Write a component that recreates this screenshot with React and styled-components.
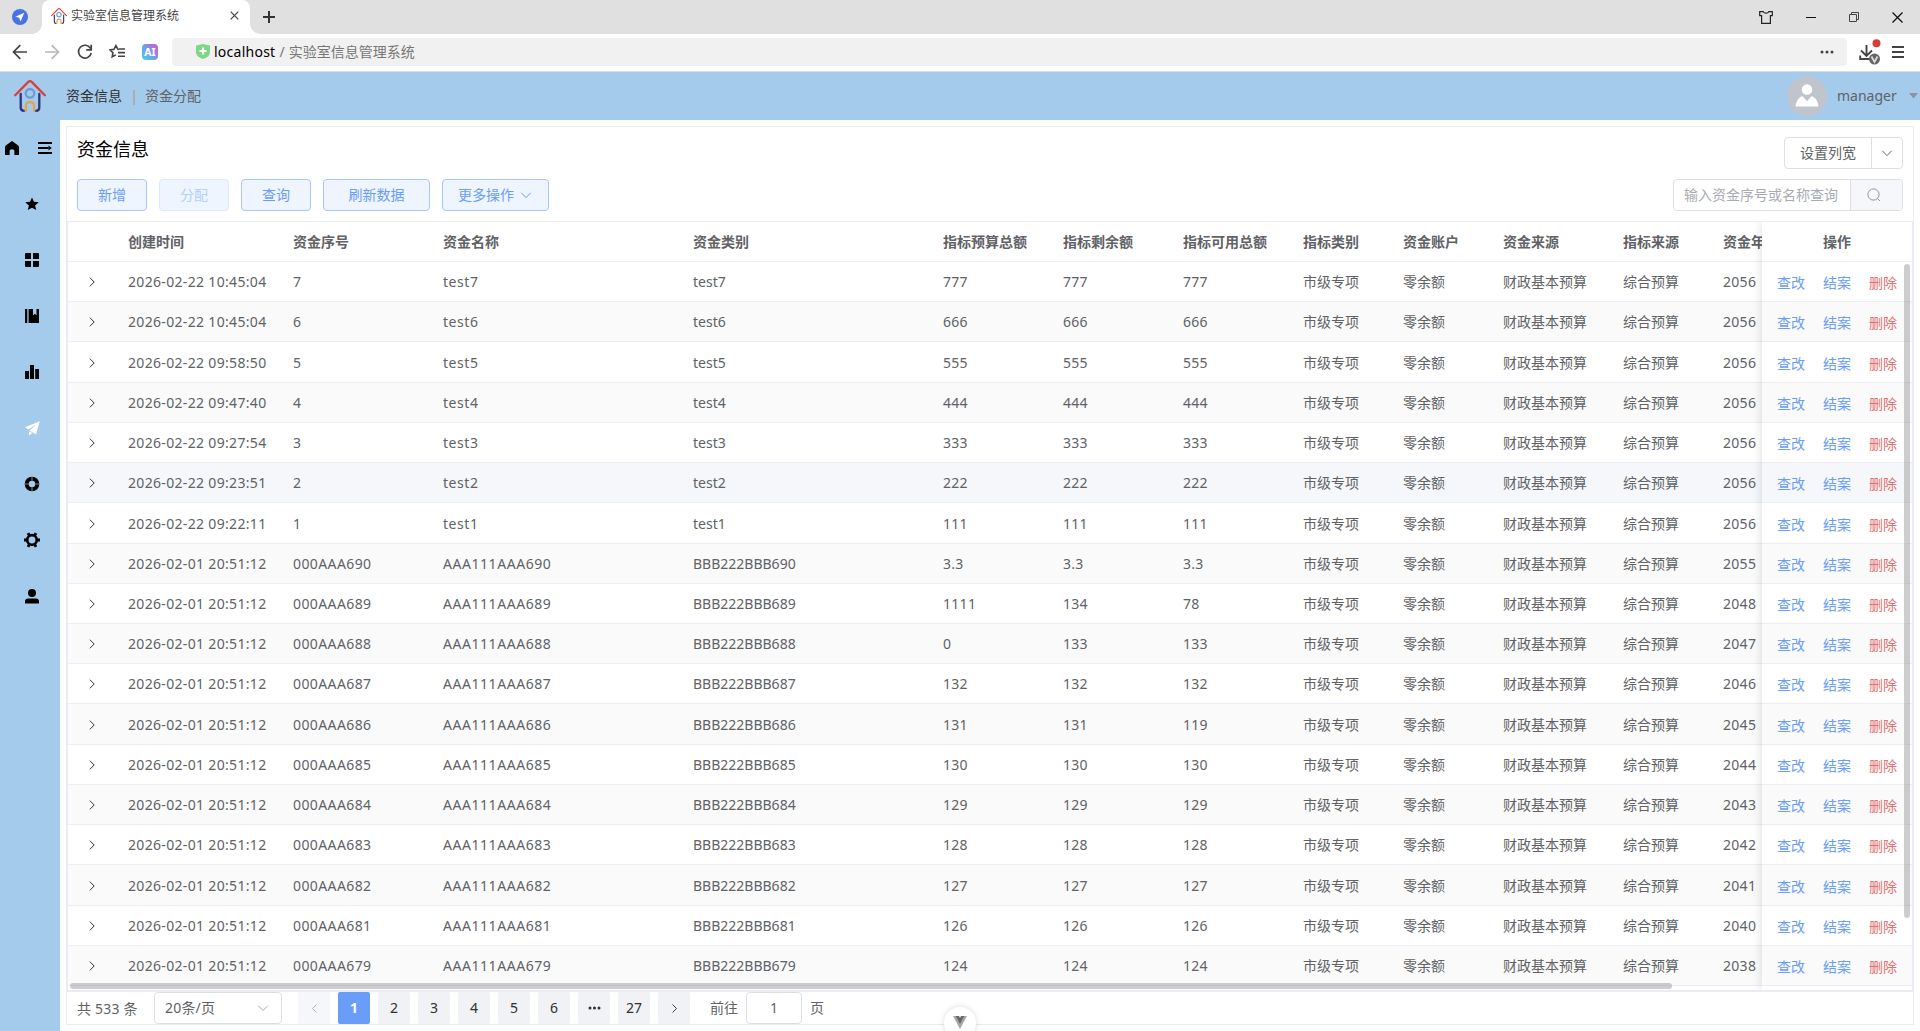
import React from 'react'
import styled, { createGlobalStyle, css } from 'styled-components'

const headers = ['创建时间', '资金序号', '资金名称', '资金类别', '指标预算总额', '指标剩余额', '指标可用总额', '指标类别', '资金账户', '资金来源', '指标来源', '资金年度']

const early = [
    ['10:45:04', 7], ['10:45:04', 6], ['09:58:50', 5], ['09:47:40', 4],
    ['09:27:54', 3], ['09:23:51', 2], ['09:22:11', 1],
]

const later = [
    [690, '3.3', '3.3', '3.3', 2055],
    [689, '1111', '134', '78', 2048],
    [688, '0', '133', '133', 2047],
    [687, '132', '132', '132', 2046],
    [686, '131', '131', '119', 2045],
    [685, '130', '130', '130', 2044],
    [684, '129', '129', '129', 2043],
    [683, '128', '128', '128', 2042],
    [682, '127', '127', '127', 2041],
    [681, '126', '126', '126', 2040],
    [679, '124', '124', '124', 2038],
]

const rows = [
    ...early.map(([time, n]) => [`2026-02-22 ${time}`, `${n}`, `test${n}`, `test${n}`, `${n * 111}`, `${n * 111}`, `${n * 111}`, 2056]),
    ...later.map(([n, total, left, usable, year]) => ['2026-02-01 20:51:12', `000AAA${n}`, `AAA111AAA${n}`, `BBB222BBB${n}`, total, left, usable, year]),
]

// letter spacing of the latin columns, in px
const tracking = [0.33, 0.4, 0.55, 0, 0.3, 0.3, 0.3]

const HOVERED = 5

function House({ size }) {
    return (
        <svg width={size} height={size} viewBox="0 0 32 32" fill="none" strokeWidth="2.3" strokeLinecap="round" strokeLinejoin="round">
            <path d="M1.2 15.2 14.3 1.9q1.7-1.6 3.4 0L30.8 15.2" stroke="#d8413b" />
            <path d="M6.7 14v13.500q0 3.300 3.300 3.300M25.300 14v13.500q0 3.300-3.300 3.300" stroke="#2d3678" />
            <circle cx="16" cy="13.300" r="4.300" stroke="#6e9ad6" />
            <path d="M11.900 31v-5q0-3.900 4.100-3.900t4.100 3.900v5" stroke="#e3a54b" />
        </svg>
    )
}

function Chevron({ dir = 'down', size = 14 }) {
    const paths = {
        down: 'M2.300 4.800 7 9.600l4.700-4.800',
        right: 'M4.900 2.700 9.200 7l-4.300 4.300',
        left: 'M9.100 2.700 4.800 7l4.300 4.300',
    }
    return (
        <svg width={size} height={size} viewBox="0 0 14 14" fill="none" stroke="currentColor" strokeWidth="1">
            <path d={paths[dir]} />
        </svg>
    )
}

function BrowserChrome() {
    return (
        <>
            <TabBar>
                <RoundBadge>
                    <svg width="16" height="16" viewBox="0 0 16 16">
                        <circle cx="8" cy="8" r="8" fill="#4a72e4" />
                        <path d="M12.300 3.700 3.300 7.700l3.900 1.100 1.300 3.800z" fill="#fff" />
                    </svg>
                </RoundBadge>
                <Tab>
                    <House size={16} />
                    <TabTitle>实验室信息管理系统</TabTitle>
                    <svg width="9" height="9" viewBox="0 0 9 9" stroke="#444" strokeWidth="1.200"><path d="m.7.7 7.600 7.600M8.300.7.7 8.300" /></svg>
                </Tab>
                <NewTab>
                    <svg width="12" height="12" viewBox="0 0 12 12" stroke="#333" strokeWidth="2"><path d="M6 0v12M0 6h12" /></svg>
                </NewTab>
                <WindowButtons>
                    <svg width="14" height="13" viewBox="0 0 14 13" fill="none" stroke="#222" strokeWidth="1.200">
                        <path d="M.7.700H4.200Q5 2.200 7 2.200T9.800.700h3.500v4H11.400v7.600H2.600V4.700H.700z" />
                    </svg>
                    <svg width="10" height="10" viewBox="0 0 10 10" stroke="#111"><path d="M0 5.500h10" /></svg>
                    <svg width="10" height="10" viewBox="0 0 10 10" fill="none" stroke="#444"><path d="M.5 2.500h7v7h-7zM2.500 2.500v-2h7v7h-2" /></svg>
                    <svg width="11" height="11" viewBox="0 0 11 11" stroke="#111" strokeWidth="1.300"><path d="m.5.5 10 10M10.500.5l-10 10" /></svg>
                </WindowButtons>
            </TabBar>
            <AddressBar>
                <NavIcons>
                    <svg width="16" height="16" viewBox="0 0 16 16" fill="none" stroke="#444" strokeWidth="1.700"><path d="M15 8H2M8.300 1.200 1.500 8l6.800 6.800" /></svg>
                    <svg width="16" height="16" viewBox="0 0 16 16" fill="none" stroke="#b8b8b8" strokeWidth="1.700"><path d="M1 8h13M7.700 1.200 14.500 8l-6.800 6.800" /></svg>
                    <svg width="16" height="16" viewBox="0 0 16 16" fill="none" stroke="#444" strokeWidth="1.700"><path d="M13.400 4.300A6.400 6.400 0 1 0 14.200 9M14.200.8v5H9.200" /></svg>
                    <svg width="16" height="16" viewBox="0 0 16 16" fill="none" stroke="#444" strokeWidth="1.600"><path d="M10 5.500 8.900 5.300 6.900 1.600 5 5.300l-4 .6 2.900 2.800-.7 4.100 3.700-1.900M10 5h6M9 8.600h7M9 12.200h7" /></svg>
                    <svg width="16" height="16" viewBox="0 0 16 16">
                        <defs>
                            <linearGradient id="ai" x1="0" y1="1" x2="1" y2="0">
                                <stop offset="0" stopColor="#45d5ef" />
                                <stop offset=".5" stopColor="#739be8" />
                                <stop offset="1" stopColor="#e04fc8" />
                            </linearGradient>
                        </defs>
                        <rect width="16" height="16" rx="4" fill="url(#ai)" />
                        <text x="8" y="11.800" textAnchor="middle" fontSize="10.500" fontWeight="700" fontFamily="Noto Sans" fill="#fff">AI</text>
                    </svg>
                </NavIcons>
                <UrlField>
                    <svg width="14" height="15" viewBox="0 0 14 15"><path d="M0 1.500 7 0l7 1.500V8q0 5-7 7-7-2-7-7z" fill="#7ed687" /><path d="M7 3.500v7M3.500 7h7" stroke="#fff" strokeWidth="2" /></svg>
                    <Host>localhost</Host>
                    <UrlPath>/ 实验室信息管理系统</UrlPath>
                    <svg width="14" height="4" viewBox="0 0 14 4" fill="#444"><circle cx="2" cy="2" r="1.500" /><circle cx="7" cy="2" r="1.500" /><circle cx="12" cy="2" r="1.500" /></svg>
                </UrlField>
                <BarTools>
                    <svg width="22" height="26" viewBox="0 0 22 26" fill="none">
                        <path d="M7.500 6v11M2 11.500 7.500 17l5.500-5.500M1.200 16.500V20H11" stroke="#444" strokeWidth="1.900" />
                        <circle cx="17.500" cy="4.200" r="4" fill="#da3d35" />
                        <circle cx="15.500" cy="20" r="5.500" fill="#666" />
                        <path d="m12.500 17.500 3 5.500 3-5.500" stroke="#ddd" strokeWidth="1.700" />
                    </svg>
                    <svg width="12" height="12" viewBox="0 0 12 12" stroke="#444" strokeWidth="1.800"><path d="M0 1h12M0 6h12M0 11h12" /></svg>
                </BarTools>
            </AddressBar>
        </>
    )
}

function Sidebar() {
    return (
        <SideNav>
            <SideTop>
                <svg width="14" height="14" viewBox="0 0 14 14"><path d="M7 0 .8 4.500Q0 5.200 0 6v8h4.600V9.800Q4.600 8.300 7 8.300t2.400 1.500V14H14V6q0-.8-.8-1.500z" /></svg>
                <svg width="14" height="12" viewBox="0 0 14 12" stroke="#000" strokeWidth="1.800"><path d="M0 1h14M0 6h10.500M0 11h14" /><path d="M10.500 3.500 13.700 6l-3.200 2.500z" stroke="none" /></svg>
            </SideTop>
            <SideItem>
                <svg width="14" height="14" viewBox="0 0 14 14"><path d="m7 .5 1.900 4.300 4.900.4-3.700 3.200 1.100 4.700L7 10.700l-4.200 2.400 1.100-4.700L.2 5.200l4.900-.4z" /></svg>
            </SideItem>
            <SideItem>
                <svg width="14" height="14" viewBox="0 0 14 14"><path d="M.8 0H6v6H0V.8zM8 0h5.200l.8.800V6H8zM0 8h6v6H.8L0 13.200zM8 8h6v5.200l-.8.800H8z" /></svg>
            </SideItem>
            <SideItem>
                <svg width="14" height="14" viewBox="0 0 14 14"><path d="M0 0h2.300v14H0zM3.600 0H8v6.500l1.800-1.700 1.700 1.700V0H14v14H3.600z" /></svg>
            </SideItem>
            <SideItem>
                <svg width="14" height="14" viewBox="0 0 14 14"><path d="M0 6h4v8H0zM5 0h4v14H5zM10.200 4H14v10h-3.800z" /></svg>
            </SideItem>
            <SideItem $active>
                <svg width="15" height="15" viewBox="0 0 15 15"><path d="M14.800.3 0 6.300l3.300 2.200 7.800-5.100-6.600 6 6.500 4zM4.100 10.300v4.500l3-2.800z" /></svg>
            </SideItem>
            <SideItem>
                <svg width="16" height="16" viewBox="0 0 16 16" fill="none"><circle cx="8" cy="8" r="5.300" stroke="#000" strokeWidth="4" /><path d="M8 .7v4M8 11.300v4M.7 8h4M11.300 8h4" stroke="#6f8fa8" strokeWidth="1.100" /></svg>
            </SideItem>
            <SideItem>
                <svg width="16" height="16" viewBox="0 0 16 16" fill="none" stroke="#000"><circle cx="8" cy="8" r="4.800" strokeWidth="2.700" /><path d="M0 8h3M13 8h3M4 1.100l1.500 2.600M10.500 12.300l1.500 2.600M12 1.100l-1.500 2.600M5.500 12.300 4 14.900" strokeWidth="2.800" /></svg>
            </SideItem>
            <SideItem>
                <svg width="14" height="15" viewBox="0 0 14 15"><circle cx="7" cy="4" r="4" /><path d="M0 14.500v-2q0-3 3.300-3h7.400q3.300 0 3.300 3v2z" /></svg>
            </SideItem>
        </SideNav>
    )
}

function FundTable() {
    return (
        <TableFrame>
            <ScrollPane>
                <HeadRow>
                    <ExpandCell />
                    {headers.map((title) => <Cell key={title}>{title}</Cell>)}
                </HeadRow>
                {rows.map((row, i) => (
                    <Row key={i} $striped={i % 2 === 1} $hovered={i === HOVERED}>
                        <ExpandCell><Chevron dir="right" /></ExpandCell>
                        {row.slice(0, 7).map((value, c) => <Cell key={c} $tracking={tracking[c]}>{value}</Cell>)}
                        <Cell>市级专项</Cell>
                        <Cell>零余额</Cell>
                        <Cell>财政基本预算</Cell>
                        <Cell>综合预算</Cell>
                        <Cell $tracking={0.3}>{row[7]}</Cell>
                    </Row>
                ))}
            </ScrollPane>
            <FixedPane>
                <ActionHead>操作</ActionHead>
                {rows.map((row, i) => (
                    <ActionRow key={i} $striped={i % 2 === 1} $hovered={i === HOVERED}>
                        <Link>查改</Link>
                        <Link>结案</Link>
                        <Link $danger>删除</Link>
                    </ActionRow>
                ))}
            </FixedPane>
            <HorizontalThumb />
            <VerticalThumb />
        </TableFrame>
    )
}

function App() {
    return (
        <Page>
            <GlobalStyle />
            <BrowserChrome />
            <AppHeader>
                <House size={32} />
                <Crumbs>
                    <Crumb $active>资金信息</Crumb>
                    <CrumbLine />
                    <Crumb>资金分配</Crumb>
                </Crumbs>
                <User>
                    <svg width="40" height="40" viewBox="0 0 40 40">
                        <circle cx="20" cy="20" r="20" fill="#c0c4cc" />
                        <circle cx="20" cy="13.500" r="5.300" fill="#fff" />
                        <path d="M8.500 30.500q.5-7.500 6.800-10.500l4.700 5.300 4.700-5.300q6.300 3 6.800 10.500z" fill="#fff" />
                    </svg>
                    <UserName>manager</UserName>
                    <svg width="9" height="6" viewBox="0 0 9 6"><path d="M0 0h9L4.500 5.500z" fill="#909399" /></svg>
                </User>
            </AppHeader>
            <Body>
                <Sidebar />
                <Card>
                    <TitleRow>
                        <Title>资金信息</Title>
                        <SplitButton>
                            <SplitLabel>设置列宽</SplitLabel>
                            <SplitArrow><Chevron /></SplitArrow>
                        </SplitButton>
                    </TitleRow>
                    <Toolbar>
                        <Button>新增</Button>
                        <Button disabled>分配</Button>
                        <Button>查询</Button>
                        <Button $wide>刷新数据</Button>
                        <Button $wide>更多操作<Chevron /></Button>
                        <Search>
                            <SearchInput>输入资金序号或名称查询</SearchInput>
                            <SearchButton>
                                <svg width="14" height="14" viewBox="0 0 14 14" fill="none" stroke="#909399"><circle cx="6.500" cy="6.500" r="5.600" /><path d="m10.600 10.600 2.400 2.400" /></svg>
                            </SearchButton>
                        </Search>
                    </Toolbar>
                    <FundTable />
                    <Pagination>
                        <Total>共 533 条</Total>
                        <PageSize>20条/页<Chevron /></PageSize>
                        <Pager>
                            <PageItem $disabled><Chevron dir="left" size={13} /></PageItem>
                            <PageItem $current>1</PageItem>
                            {[2, 3, 4, 5, 6].map((n) => <PageItem key={n}>{n}</PageItem>)}
                            <PageItem>
                                <svg width="13" height="4" viewBox="0 0 13 4" fill="#303133"><circle cx="2" cy="2" r="1.500" /><circle cx="6.500" cy="2" r="1.500" /><circle cx="11" cy="2" r="1.500" /></svg>
                            </PageItem>
                            <PageItem>27</PageItem>
                            <PageItem><Chevron dir="right" size={13} /></PageItem>
                        </Pager>
                        <Jump>前往<JumpInput>1</JumpInput>页</Jump>
                    </Pagination>
                </Card>
            </Body>
            <FloatingMark>
                <svg width="14" height="13" viewBox="0 0 14 13">
                    <path d="M0 0h5l2 4 2-4h5L7 13z" fill="#a8a8a8" />
                    <path d="M2.800 0H6l1 2 1-2h3.200L7 8z" fill="#666" />
                </svg>
            </FloatingMark>
        </Page>
    )
}

const GlobalStyle = createGlobalStyle`
    * {
        box-sizing: border-box;
    }

    body {
        margin: 0;
        overflow: hidden;
        background: #fff;
        color: #606266;
        font-family: 'Noto Sans', 'Noto Sans CJK SC', sans-serif;
        font-size: 14px;
        line-height: 20px;
    }

    svg {
        display: block;
        flex: none;
    }
`;

const Page = styled.div`
    display: flex;
    flex-direction: column;
    position: relative;
    width: 1920px;
    height: 1031px;
    overflow: hidden;
`;

const TabBar = styled.div`
    display: flex;
    align-items: center;
    height: 34px;
    background: #e0e0e0;
`;

const RoundBadge = styled.div`
    padding: 0 14px 0 12px;
`;

const Tab = styled.div`
    display: flex;
    align-items: center;
    position: relative;
    width: 208px;
    height: 34px;
    padding: 0 11px 3px 9px;
    background: #fff;
    border-radius: 8px 8px 0 0;

    /* flared feet on both sides */
    &::before, &::after {
        content: '';
        position: absolute;
        bottom: 0;
        width: 10px;
        height: 10px;
    }

    &::before {
        left: -10px;
        background: radial-gradient(circle at 0 0, transparent 9.500px, #fff 10px);
    }

    &::after {
        right: -10px;
        background: radial-gradient(circle at 100% 0, transparent 9.500px, #fff 10px);
    }
`;

const TabTitle = styled.div`
    flex: 1;
    margin-left: 4px;
    font-size: 12px;
    color: #444;
`;

const NewTab = styled.div`
    margin-left: 13px;
`;

const WindowButtons = styled.div`
    display: flex;
    align-items: center;
    gap: 33px;
    margin-left: auto;
    padding-right: 17px;
`;

const AddressBar = styled.div`
    display: flex;
    align-items: center;
    height: 38px;
    padding: 0 16px 2px 12px;
    border-bottom: 1px solid #d9dde0;
`;

const NavIcons = styled.div`
    display: flex;
    gap: 16.400px;
    width: 160px;
`;

const UrlField = styled.div`
    display: flex;
    align-items: center;
    flex: 1;
    height: 28px;
    padding: 0 13px 0 24px;
    background: #f1f1f1;
    border-radius: 4px;
`;

const Host = styled.span`
    margin: 0 4px;
    letter-spacing: 0.25px;
    color: #000;
`;

const UrlPath = styled.span`
    flex: 1;
    word-spacing: 0.5px;
    color: #777;
`;

const BarTools = styled.div`
    display: flex;
    align-items: center;
    gap: 11px;
    margin-left: 12px;
`;

const AppHeader = styled.header`
    display: flex;
    align-items: center;
    height: 48px;
    padding: 0 2px 0 14px;
    background: #a4cbeb;
`;

const Crumbs = styled.div`
    display: flex;
    align-items: center;
    gap: 11px;
    margin-left: 20px;
`;

const Crumb = styled.span`
    color: ${({ $active }) => ($active ? '#303133' : '#606266')};
`;

const CrumbLine = styled.span`
    width: 2px;
    height: 15px;
    margin: 2px -1px 0 0;
    background: #a6acb8;
`;

const User = styled.div`
    display: flex;
    align-items: center;
    margin-left: auto;
`;

const UserName = styled.span`
    width: 72px;
    margin-left: 10px;
`;

const Body = styled.div`
    display: flex;
    flex: 1;
`;

const SideNav = styled.nav`
    width: 60px;
    background: #a4cbeb;
`;

const SideTop = styled.div`
    display: flex;
    align-items: center;
    justify-content: space-between;
    height: 56px;
    padding: 0 8px 0 5px;
`;

const SideItem = styled.div`
    display: flex;
    align-items: center;
    justify-content: center;
    height: 56px;
    padding-left: 4px;
    fill: ${({ $active }) => ($active ? '#fff' : '#000')};
`;

const Card = styled.main`
    width: 1848px;
    height: 899px;
    margin: 6px 0 0 6px;
    border: 1px solid #ebecf3;
`;

const TitleRow = styled.div`
    display: flex;
    align-items: center;
    justify-content: space-between;
    height: 42px;
    padding: 10px 10px 0;
`;

const Title = styled.div`
    font-size: 18px;
    line-height: 24px;
    color: #000;
    margin-top: -8px;
`;

const SplitButton = styled.div`
    display: flex;
    height: 32px;
    border: 1px solid #dcdfe6;
    border-radius: 4px;
`;

const SplitLabel = styled.div`
    display: flex;
    align-items: center;
    width: 87px;
    padding-left: 15px;
    border-right: 1px solid #dcdfe6;
`;

const SplitArrow = styled.div`
    display: flex;
    align-items: center;
    justify-content: center;
    width: 30px;
`;

const Toolbar = styled.div`
    display: flex;
    gap: 12px;
    height: 52px;
    padding: 10px 10px 0;
`;

const Button = styled.button`
    display: flex;
    align-items: center;
    justify-content: center;
    gap: 5px;
    width: ${({ $wide }) => ($wide ? 107 : 70)}px;
    height: 32px;
    padding: 0;
    border: 1px solid #a6c8fc;
    border-radius: 4px;
    background: #eff5ff;
    color: #6a9df8;
    font: inherit;

    &:disabled {
        border-color: #dbe8fe;
        color: #b3cffc;
    }
`;

const Search = styled.div`
    display: flex;
    width: 230px;
    height: 32px;
    margin-left: auto;
    border: 1px solid #dcdfe6;
    border-radius: 4px;
    overflow: hidden;
`;

const SearchInput = styled.div`
    display: flex;
    align-items: center;
    width: 177px;
    padding-left: 10px;
    border-right: 1px solid #dcdfe6;
    color: #a8abb2;
    white-space: nowrap;
`;

const SearchButton = styled.div`
    display: flex;
    align-items: center;
    flex: 1;
    padding-left: 16px;
    background: #f5f7fa;
`;

const TableFrame = styled.div`
    display: flex;
    position: relative;
    height: 771px;
    overflow: hidden;
    border: 1px solid #ebecf3;
    border-bottom-width: 2px;
`;

const ScrollPane = styled.div`
    width: 1694px;
    overflow: hidden;
`;

const FixedPane = styled.div`
    position: relative;
    width: 150px;
    box-shadow: 0 0 10px rgba(0, 0, 0, 0.14);
    background: #fff;
    z-index: 1;
`;

const rowBase = css`
    height: 40.222px;
    border-bottom: 1px solid #ebeef5;
    background: ${({ $striped, $hovered }) => ($hovered ? '#f5f7fa' : $striped ? '#fafafa' : '#fff')};
`;

const Row = styled.div`
    ${rowBase}
    display: grid;
    grid-template-columns: 50px 165px 150px 250px 250px 120px 120px 120px 100px 100px 120px 100px 100px;
    align-items: center;
    width: 1745px;
    padding-top: 1.300px;
`;

const HeadRow = styled(Row)`
    height: 40px;
    padding-top: 0;
    font-weight: 700;
`;

const ExpandCell = styled.div`
    display: flex;
    justify-content: center;
    padding-right: 2px;
    color: #303133;
`;

const Cell = styled.div`
    padding-left: 10px;
    white-space: nowrap;
    letter-spacing: ${({ $tracking = 0 }) => $tracking}px;
`;

const ActionRow = styled.div`
    ${rowBase}
    display: flex;
    align-items: center;
    gap: 18px;
    padding: 3.300px 0 0 15px;
`;

const ActionHead = styled.div`
    ${rowBase}
    display: flex;
    align-items: center;
    justify-content: center;
    height: 40px;
    font-weight: 700;
`;

const Link = styled.span`
    color: ${({ $danger }) => ($danger ? '#e07070' : '#6a9df8')};
`;

const HorizontalThumb = styled.div`
    position: absolute;
    left: 2px;
    bottom: 1px;
    z-index: 2;
    width: 1602px;
    height: 6px;
    border-radius: 3px;
    background: rgba(144, 144, 144, 0.45);
`;

const VerticalThumb = styled.div`
    position: absolute;
    top: 42px;
    right: 2px;
    z-index: 2;
    width: 6px;
    height: 654px;
    border-radius: 3px;
    background: rgba(144, 144, 144, 0.45);
`;

const Pagination = styled.div`
    display: flex;
    align-items: center;
    height: 32px;
    padding-left: 10px;
`;

const Total = styled.div`
    width: 77px;
    padding-top: 1px;
    letter-spacing: 0.2px;
    white-space: nowrap;
`;

const PageSize = styled.div`
    display: flex;
    align-items: center;
    justify-content: space-between;
    width: 128px;
    height: 32px;
    margin-right: 16px;
    padding: 0 11px 0 10px;
    border: 1px solid #dcdfe6;
    border-radius: 4px;
    letter-spacing: 0.2px;

    svg {
        color: #a8abb2;
    }
`;

const Pager = styled.div`
    display: flex;
    gap: 8px;
`;

const PageItem = styled.div`
    display: flex;
    align-items: center;
    justify-content: center;
    width: 32px;
    height: 32px;
    border-radius: 2px;
    background: ${({ $current, $disabled }) => ($current ? '#6a9df8' : $disabled ? '#f5f7fa' : '#f0f2f5')};
    color: ${({ $current, $disabled }) => ($current ? '#fff' : $disabled ? '#a8abb2' : '#303133')};
    font-weight: ${({ $current }) => ($current ? 700 : 400)};
`;

const Jump = styled.div`
    display: flex;
    align-items: center;
    gap: 8px;
    margin-left: 20px;
`;

const JumpInput = styled.div`
    width: 56px;
    height: 32px;
    border: 1px solid #dcdfe6;
    border-radius: 4px;
    line-height: 30px;
    text-align: center;
`;

const FloatingMark = styled.div`
    position: absolute;
    left: 944px;
    top: 1007px;
    display: flex;
    align-items: center;
    justify-content: center;
    width: 32px;
    height: 32px;
    padding-bottom: 1px;
    border-radius: 50%;
    background: #fff;
    box-shadow: 0 0 6px rgba(0, 0, 0, 0.15);
`;

export default App;
